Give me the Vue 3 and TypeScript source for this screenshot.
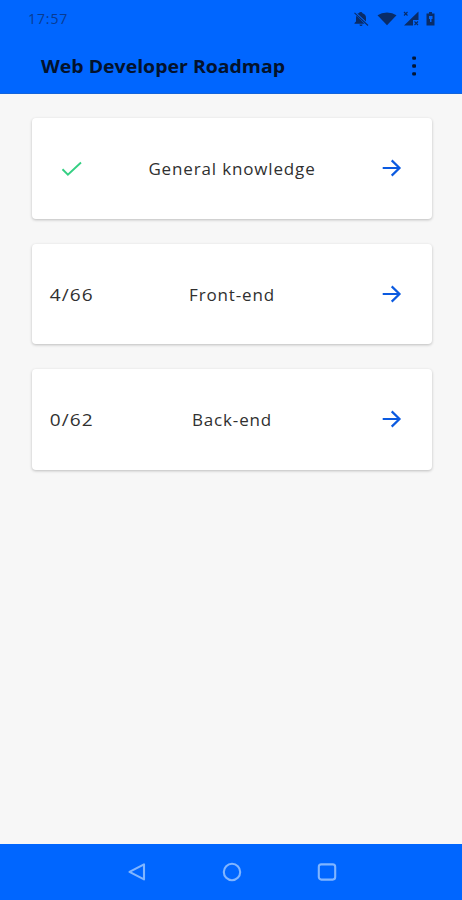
<script setup lang="ts">
interface Track {
  name: string
  done: number
  total: number
  complete: boolean
}

const tracks: Track[] = [
  { name: 'General knowledge', done: 0, total: 0, complete: true },
  { name: 'Front-end', done: 4, total: 66, complete: false },
  { name: 'Back-end', done: 0, total: 62, complete: false },
]
</script>

<template>
  <div class="screen">
    <header class="top">
      <div class="status">
        <span class="time">17:57</span>
        <div class="indicators">
          <svg class="bell" width="16" height="16" viewBox="0 0 16 16">
            <path d="M4 2.8 5.6 2.2Q6.5 1 8 1Q9 1 9.5 2.2Q13 3.2 13 7V10.4L4.6 2.8M3.5 4.8Q3 5.6 3 7V10.5L1.5 12V12.8H11.5L3.5 4.8M6.4 13.5H9.6Q9.4 15 8 15T6.4 13.5" />
            <path class="slash" d="M1.5 1.8 15 14.5" />
          </svg>
          <svg class="wifi" width="20" height="14" viewBox="0 0 20 14">
            <path d="M.5 3.2Q4.5 .4 10 .4T19.5 3.2L10 13.2Z" />
          </svg>
          <svg class="signal" width="16" height="15" viewBox="0 0 16 15">
            <path d="M15.5.5V9H10V14.5H1Z" />
            <path class="slash" d="m1 1 3.5 3.5m0-3.5L1 4.5M11.5 10.5l3.5 3.5m0-3.5L11.5 14" />
          </svg>
          <svg class="battery" width="9" height="14" viewBox="0 0 9 14">
            <path fill-rule="evenodd" d="M3 0H6V1.5H8.5V13.5H.5V1.5H3ZM3 4V7H4V10H5.5V7H6.5V4Z" />
          </svg>
        </div>
      </div>
      <div class="bar">
        <h1>Web Developer Roadmap</h1>
        <svg class="more" width="6" height="22" viewBox="0 0 6 22">
          <rect x="1.2" y="1.4" width="3.8" height="3.4" rx="1" />
          <rect x="1.2" y="9.3" width="3.8" height="3.4" rx="1" />
          <rect x="1.2" y="17.2" width="3.8" height="3.4" rx="1" />
        </svg>
      </div>
    </header>

    <main class="list">
      <article v-for="track in tracks" :key="track.name" class="card">
        <div class="progress">
          <svg v-if="track.complete" class="check" width="22" height="16" viewBox="0 0 22 16">
            <path d="m1.5 8.3 5.4 5.3L20 1.5" />
          </svg>
          <span v-else class="count">{{ track.done }}/{{ track.total }}</span>
        </div>
        <div class="name"><span>{{ track.name }}</span></div>
        <svg class="arrow" width="20" height="18" viewBox="0 0 20 18">
          <path d="M.7 9H17.5M9.7 1.4 17.5 9 9.7 16.6" />
        </svg>
      </article>
    </main>

    <nav class="nav">
      <svg width="20" height="20" viewBox="0 0 20 20"><path d="M17 2.4V17.4L2.5 9.9Z" /></svg>
      <svg width="20" height="20" viewBox="0 0 20 20"><circle cx="10" cy="10" r="8.2" /></svg>
      <svg width="20" height="20" viewBox="0 0 20 20"><rect x="1.8" y="2.4" width="16.4" height="15.2" rx="2.5" /></svg>
    </nav>
  </div>
</template>

<style>
body {
  margin: 0;
}
</style>

<style scoped>
.screen {
  display: flex;
  flex-direction: column;
  height: 900px;
  background: #f7f7f7;
  font-family: "Open Sans", "Noto Sans", sans-serif;
  color: #303030;
}
.top {
  box-sizing: border-box;
  height: 94px;
  background: #0066ff;
  border-bottom: 1px solid #1264dc;
}
.status {
  display: flex;
  justify-content: space-between;
  align-items: center;
  height: 37px;
  padding: 0 27px 0 28px;
}
.time {
  font-size: 14px;
  letter-spacing: 0.9px;
  color: #093b91;
}
.indicators {
  display: flex;
  align-items: center;
  fill: #092c68;
}
.bell {
  margin-right: 8px;
}
.wifi {
  margin-right: 6px;
}
.signal {
  margin-right: 7px;
}
.slash {
  fill: none;
  stroke: #092c68;
  stroke-width: 1.1;
}
.bar {
  display: flex;
  justify-content: space-between;
  align-items: center;
  height: 56px;
  padding: 1px 45px 0 41px;
}
h1 {
  margin: 0;
  font-size: 17px;
  font-weight: 700;
  line-height: 24px;
  white-space: nowrap;
  color: #03122c;
  transform: translateY(1px) scaleX(1.145);
  transform-origin: left;
}
.more {
  fill: #031634;
}
.list {
  flex: 1;
  display: flex;
  flex-direction: column;
  gap: 25px;
  padding: 24px 30px 0 32px;
}
.card {
  display: grid;
  grid-template-columns: 80px 1fr 80px;
  align-items: center;
  height: 100.5px;
  border-radius: 4px;
  background: #fff;
  box-shadow: 0 1px 3px rgba(0, 0, 0, 0.24);
}
.progress,
.name {
  display: flex;
  justify-content: center;
  padding-top: 2px;
  font-size: 17px;
  line-height: 24px;
  letter-spacing: 0.85px;
  white-space: nowrap;
}
.count {
  letter-spacing: 1px;
  transform: scaleX(1.12);
}
.check {
  fill: none;
  stroke: #35cf83;
  stroke-width: 1.9;
}
.arrow {
  justify-self: center;
  fill: none;
  stroke: #0b5ae0;
  stroke-width: 2.2;
}
.nav {
  display: flex;
  justify-content: center;
  align-items: center;
  gap: 75px;
  height: 56px;
  padding-left: 1px;
  background: #0066ff;
  fill: none;
  stroke: #80b5ff;
  stroke-width: 2.1;
  stroke-linejoin: round;
}
</style>
